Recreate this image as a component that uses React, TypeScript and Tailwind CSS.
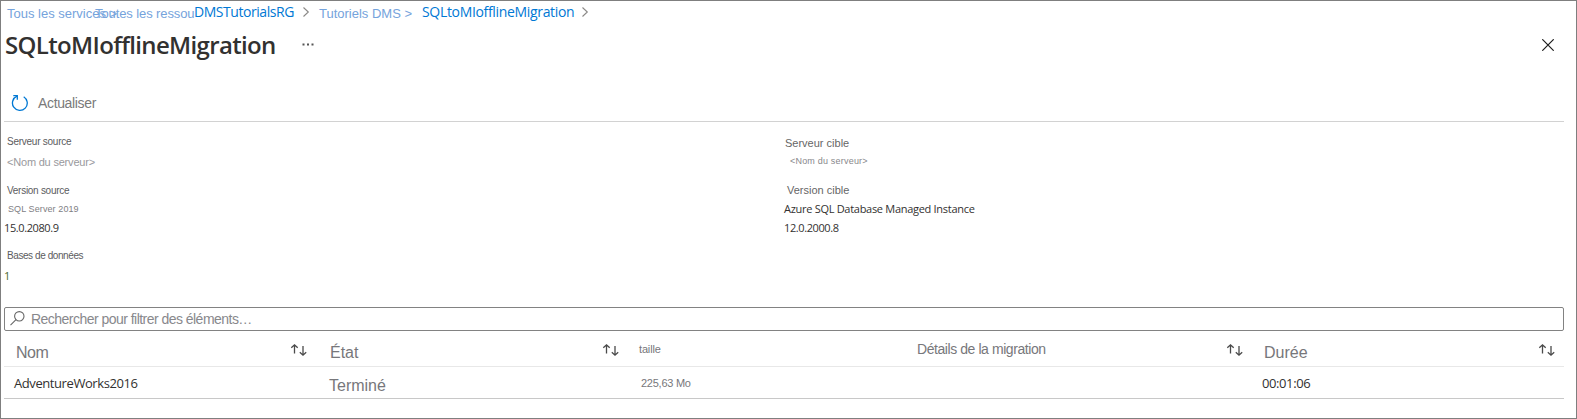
import React from "react";

const arial = "font-['Liberation_Sans',Arial,sans-serif] whitespace-nowrap shrink-0 leading-[20px]";
const segoe = "font-['Open_Sans','Noto_Sans',sans-serif] whitespace-nowrap shrink-0 leading-[20px]";

function Arial({ className = "", children }: { className?: string; children: React.ReactNode }) {
  return <div className={`${arial} ${className}`}>{children}</div>;
}

function Segoe({ className = "", children }: { className?: string; children: React.ReactNode }) {
  return <div className={`${segoe} ${className}`}>{children}</div>;
}

function Chevron({ className = "" }: { className?: string }) {
  return (
    <svg className={`shrink-0 ${className}`} width="7" height="12" viewBox="0 0 7 12" fill="none" stroke="#8a8886" strokeWidth="1.1">
      <path d="M0.5 1.5L5.3 6L0.5 10.5" />
    </svg>
  );
}

function Sort({ className = "" }: { className?: string }) {
  return (
    <svg className={`shrink-0 mt-[12px] ${className}`} width="17" height="14" viewBox="0 0 17 14" fill="none" stroke="#4a4a4a" strokeWidth="1.3">
      <path d="M4.5 10.5V1.8M1.3 4.8L4.5 1.8L7.7 4.8" />
      <path d="M13 3V12.2M9.8 9.2L13 12.2L16.2 9.2" />
    </svg>
  );
}

export default function App() {
  return (
    <main className="flex h-[419px] w-[1577px] flex-col overflow-hidden border border-[#7f7f7f] bg-white pl-[3px]">
      <nav className="flex h-[26px] shrink-0 items-start">
        <Arial className="ml-[3px] mt-[3px] w-[88px] text-[13px] text-[#75a3dc]">Tous les services &gt;</Arial>
        <Arial className="mt-[3px] w-[99px] text-[13px] tracking-[-0.1px] text-[#75a3dc]">Toutes les ressou</Arial>
        <Segoe className="mt-[1px] w-[109px] text-[14px] tracking-[-0.45px] text-[#0078d4]">DMSTutorialsRG</Segoe>
        <Chevron className="mt-[5px] mr-[9px]" />
        <Arial className="mt-[3px] w-[103px] text-[13px] text-[#75a3dc]">Tutoriels DMS &gt;</Arial>
        <Segoe className="mt-[1px] w-[160px] text-[14px] tracking-[-0.33px] text-[#0078d4]">SQLtoMIofflineMigration</Segoe>
        <Chevron className="mt-[5px]" />
      </nav>

      <header className="flex h-[52px] shrink-0 items-start">
        <h1 className="ml-[1px] w-[297px] shrink-0 whitespace-nowrap font-['Open_Sans','Noto_Sans',sans-serif] text-[24px] font-semibold leading-[36px] tracking-[-0.65px] text-[#323130]">
          SQLtoMIofflineMigration
        </h1>
        <svg className="mt-[16px]" width="14" height="3" viewBox="0 0 14 3" fill="#555">
          <rect x="0.5" y="0.5" width="2" height="2" />
          <rect x="5" y="0.5" width="2" height="2" />
          <rect x="9.5" y="0.5" width="2" height="2" />
        </svg>
        <svg className="ml-auto mr-[22px] mt-[12px]" width="12" height="12" viewBox="0 0 12 12" stroke="#1b1b1b" strokeWidth="1.2">
          <path d="M0.3 0.3L11.7 11.7M11.7 0.3L0.3 11.7" />
        </svg>
      </header>

      <section className="flex h-[43px] w-[1560px] shrink-0 items-start border-b border-[#d2d2d2] pl-[7px] pt-[15px]">
        <svg width="17" height="18" viewBox="0 0 17 18" fill="none" stroke="#0078d4" strokeWidth="1.3">
          <path d="M12.7 2.7A7.4 7.4 0 1 1 6 2.2" />
          <path d="M2.3 1.7H6.3V5.7" />
        </svg>
        <Arial className="ml-[10px] mt-[-1px] text-[14px] tracking-[-0.35px] text-[#7a7a7a]">Actualiser</Arial>
      </section>

      <section className="flex h-[185px] shrink-0 items-start">
        <div className="flex w-[780px] shrink-0 flex-col">
          <Arial className="ml-[3px] mt-[10px] text-[10px] tracking-[-0.25px] text-[#5c5c60]">Serveur source</Arial>
          <Arial className="ml-[3px] text-[11px] tracking-[-0.2px] text-[#99999d]">&lt;Nom du serveur&gt;</Arial>
          <Arial className="ml-[3px] mt-[9px] text-[10px] tracking-[-0.28px] text-[#5c5c60]">Version source</Arial>
          <Arial className="ml-[4px] mt-[-2px] text-[9px] tracking-[0.1px] text-[#808084]">SQL Server 2019</Arial>
          <Segoe className="mt-[-1px] text-[11px] tracking-[-0.4px] text-[#323130]">15.0.2080.9</Segoe>
          <Arial className="ml-[3px] mt-[8px] text-[10px] tracking-[-0.42px] text-[#5c5c60]">Bases de données</Arial>
          <Segoe className="text-[11px] text-[#4c6a2c]">1</Segoe>
        </div>
        <div className="flex flex-col">
          <Arial className="ml-[1px] mt-[11px] text-[11px] text-[#666]">Serveur cible</Arial>
          <Arial className="ml-[6px] mt-[-2px] text-[9px] tracking-[0.2px] text-[#88888c]">&lt;Nom du serveur&gt;</Arial>
          <Arial className="ml-[3px] mt-[9px] text-[11px] text-[#666]">Version cible</Arial>
          <Segoe className="mt-[-1px] text-[11px] tracking-[-0.29px] text-[#323130]">Azure SQL Database Managed Instance</Segoe>
          <Segoe className="mt-[-1px] text-[11px] tracking-[-0.4px] text-[#323130]">12.0.2000.8</Segoe>
        </div>
      </section>

      <section className="flex h-[24px] w-[1560px] shrink-0 items-start rounded-[2px] border border-[#828282] pl-[5px]">
        <svg className="mt-[3px]" width="15" height="15" viewBox="0 0 15 15" fill="none" stroke="#666" strokeWidth="1.1">
          <circle cx="9.3" cy="5.3" r="4.7" />
          <path d="M6 8.7L0.5 14.2" />
        </svg>
        <Arial className="ml-[6px] mt-[1px] text-[14px] tracking-[-0.53px] text-[#88888c]">Rechercher pour filtrer des éléments…</Arial>
      </section>

      <section className="flex w-[1560px] shrink-0 flex-col">
        <div className="flex h-[36px] shrink-0 items-start border-b border-[#e8e8e8]">
          <Arial className="ml-[12px] mt-[12px] w-[274px] text-[16px] tracking-[-0.5px] text-[#77777b]">Nom</Arial>
          <Sort className="mr-[23px]" />
          <Arial className="mt-[12px] w-[272px] text-[16px] text-[#77777b]">État</Arial>
          <Sort className="mr-[20px]" />
          <Arial className="mt-[8px] w-[278px] text-[11px] tracking-[-0.15px] text-[#77777b]">taille</Arial>
          <Arial className="mt-[8px] w-[309px] text-[14px] tracking-[-0.43px] text-[#77777b]">Détails de la migration</Arial>
          <Sort className="mr-[21px]" />
          <Arial className="mt-[12px] w-[274px] text-[16px] text-[#77777b]">Durée</Arial>
          <Sort />
        </div>
        <div className="flex h-[32px] shrink-0 items-start border-b border-[#c8c8c8]">
          <Segoe className="ml-[10px] mt-[6px] w-[315px] text-[13px] tracking-[-0.42px] text-[#323130]">AdventureWorks2016</Segoe>
          <Arial className="mt-[9px] w-[312px] text-[16px] text-[#77777b]">Terminé</Arial>
          <Arial className="mt-[6px] w-[621px] text-[11px] tracking-[-0.25px] text-[#77777b]">225,63 Mo</Arial>
          <Segoe className="mt-[6px] text-[13px] tracking-[-0.4px] text-[#323130]">00:01:06</Segoe>
        </div>
      </section>
    </main>
  );
}
